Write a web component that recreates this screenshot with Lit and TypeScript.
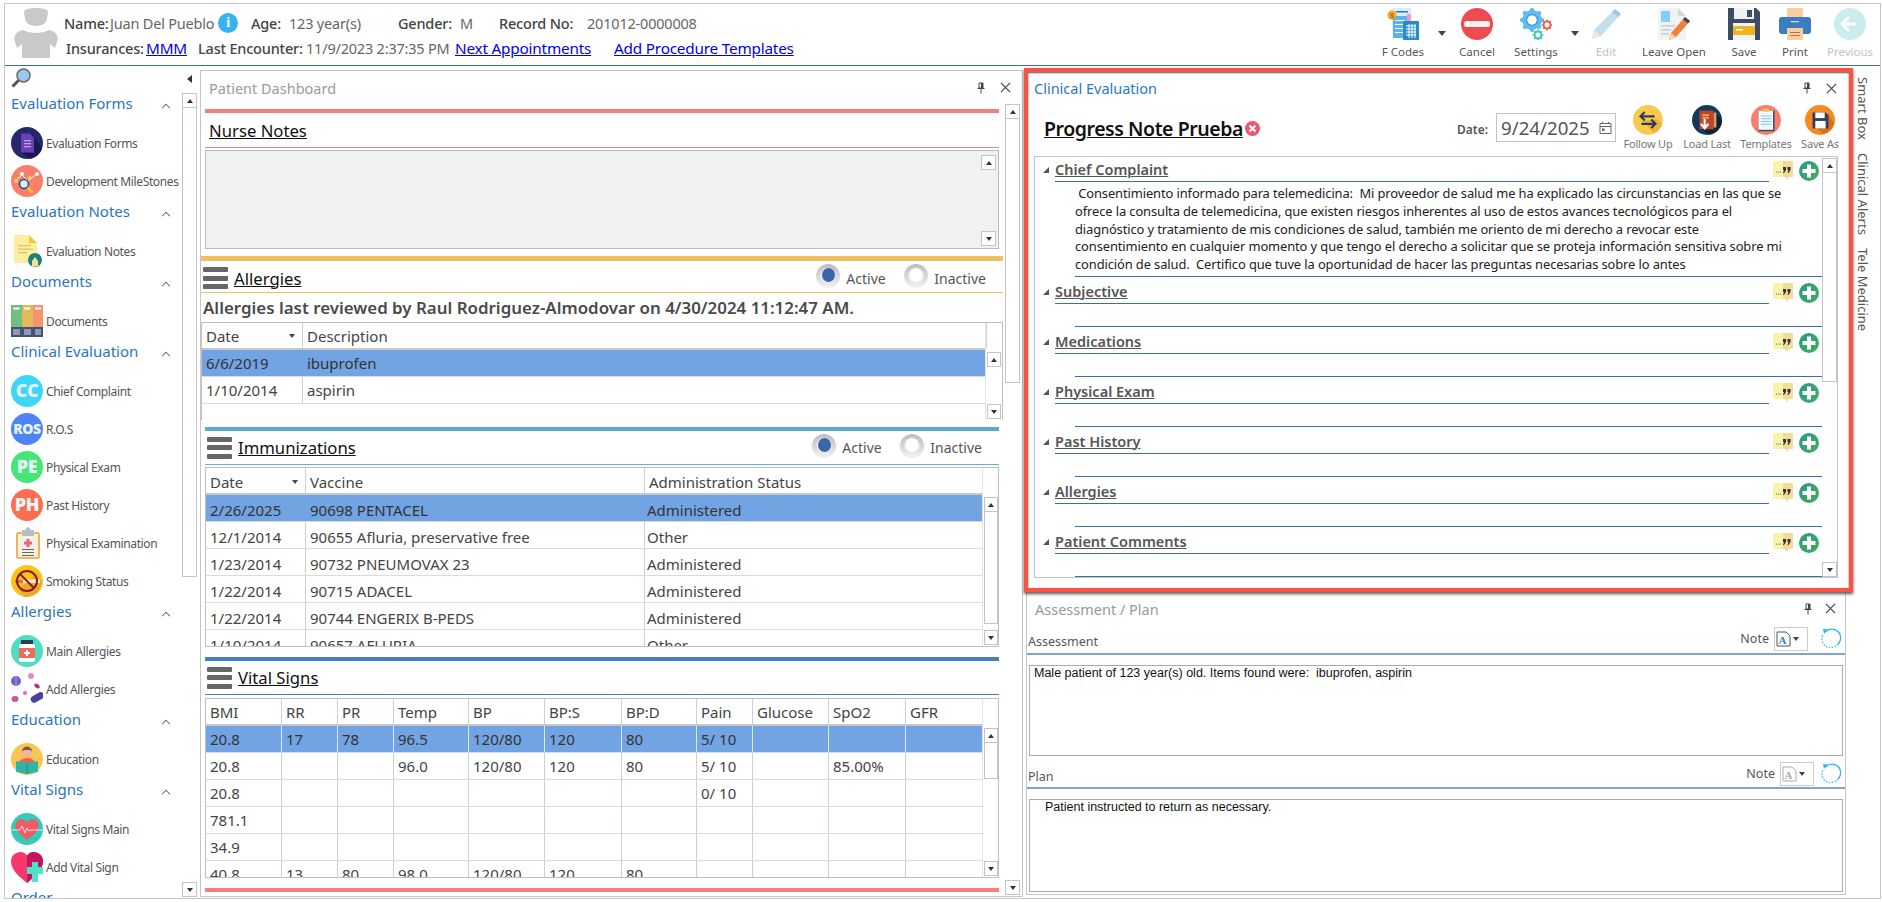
import { LitElement, html, css, svg } from "lit";
import { customElement } from "lit/decorators.js";

const gear = (cx: number, cy: number, r: number, color: string, teeth = 8, ring = "") => {
  let d = "";
  const n = teeth * 4;
  for (let i = 0; i < n; i++) {
    const a = ((i - 0.5) / n) * Math.PI * 2;
    const rad = i % 4 < 2 ? r : r * 0.8;
    d += `${i ? "L" : "M"}${(cx + Math.cos(a) * rad).toFixed(2)} ${(cy + Math.sin(a) * rad).toFixed(2)}`;
  }
  return svg`<path d="${d}Z" fill="${color}"/><circle cx="${cx}" cy="${cy}" r="${r * 0.45}" fill="#fff" stroke="${ring || color}" stroke-width="${ring ? 1.2 : 0}"/>`;
};

const ico = (body: unknown, vb = "0 0 32 32") =>
  html`<svg viewBox=${vb} width="32" height="32">${body}</svg>`;

const badge = (bg: string, t: string, size = 15) =>
  ico(svg`<circle cx="16" cy="16" r="16" fill="${bg}"/><text x="16" y="${16 + size * 0.36}" text-anchor="middle" font-family="Open Sans,sans-serif" font-weight="800" font-size="${size}" fill="#e6f4f4">${t}</text>`);

const ICONS: Record<string, unknown> = {
  forms: ico(svg`<circle cx="16" cy="16" r="16" fill="#25296b"/><path d="M11 26l10-20 10 16a16 16 0 0 1-12 9.700z" fill="#181a4c"/><path d="M10 6.500h9l4 4v15H10z" fill="#6a3fb5"/><g fill="#b9a3e3"><rect x="13" y="13" width="7" height="1.300"/><rect x="13" y="16" width="7" height="1.300"/><rect x="13" y="19" width="7" height="1.300"/></g>`),
  miles: ico(svg`<circle cx="16" cy="16" r="16" fill="#f8806a"/><path d="M4 16l7-6 6 6 9-7" stroke="#fff" stroke-width="1" fill="none"/><circle cx="5" cy="16" r="2" fill="#f6d06a"/><circle cx="11" cy="9" r="2" fill="#fff"/><circle cx="19" cy="13" r="2" fill="#f6d06a"/><circle cx="26" cy="9" r="2" fill="#dff"/><circle cx="13" cy="19" r="4.500" fill="#cfeff5" stroke="#2b4a6b" stroke-width="1.500"/><path d="M16.500 22.500l5 5" stroke="#f5c04a" stroke-width="2.500"/>`),
  evnote: ico(svg`<path d="M3 0h15l8 8v20H3z" fill="#fbeea0"/><path d="M18 0l8 8h-8z" fill="#f1c93c"/><g fill="#d9c46a"><rect x="7" y="10" width="13" height="1.300"/><rect x="7" y="13.500" width="15" height="1.300"/><rect x="7" y="17" width="9" height="1.300"/></g><circle cx="24" cy="25" r="7" fill="#1d7e86"/><path d="M21 32v-6l3-4 3 4v5z" fill="#f8e08a"/>`),
  docs: ico(svg`<rect width="11" height="32" fill="#6fc07f"/><rect x="11" width="11" height="32" fill="#e4b95a"/><rect x="22" width="10" height="32" fill="#f0956f"/><g fill="#fff"><rect x="2.500" y="2.500" width="6" height="2"/><rect x="13" y="2.500" width="6" height="2"/><rect x="24" y="2.500" width="6" height="2"/></g><rect y="22" width="32" height="10" fill="#44526f"/><g fill="#8b98bb"><rect x="2" y="24" width="7" height="6"/><rect x="13" y="24" width="7" height="6"/><rect x="24" y="24" width="6" height="6"/></g>`),
  cc: badge("#3ed5fb", "CC", 18),
  ros: badge("#4e85f6", "ROS", 14),
  pe: badge("#45e578", "PE", 18),
  ph: badge("#fb6e50", "PH", 18),
  clip: ico(svg`<rect x="5" y="5" width="24" height="27" rx="2" fill="#f4b35e"/><rect x="7" y="7" width="20" height="23" fill="#f6f0e2"/><rect x="11" y="3" width="12" height="6" rx="1" fill="#b6bcc4"/><circle cx="17" cy="2.500" r="2.200" fill="#b6bcc4"/><path d="M15.500 12h3v2.500H21v3h-2.500V20h-3v-2.500H13v-3h2.500z" fill="#f0627a"/><g fill="#666"><rect x="11" y="22" width="12" height="1"/><rect x="11" y="25" width="12" height="1"/><rect x="11" y="28" width="12" height="1"/></g>`),
  smoke: ico(svg`<circle cx="16" cy="16" r="16" fill="#f9c416"/><path d="M8 24L26 8l5 10a16 16 0 0 1-18 13.500z" fill="#eba831"/><rect x="4" y="14.500" width="25" height="3.500" fill="#f3e9dc"/><rect x="4" y="14.500" width="8" height="3.500" fill="#e2763a"/><circle cx="16" cy="16" r="10" fill="none" stroke="#8c1c14" stroke-width="2"/><path d="M9 9l14 14" stroke="#8c1c14" stroke-width="2"/>`),
  mainall: ico(svg`<circle cx="16" cy="16" r="16" fill="#4fdcc4"/><rect x="10" y="5" width="12" height="4" fill="#2a3f55"/><rect x="8" y="9" width="16" height="18" rx="2.500" fill="#fff"/><rect x="8" y="13" width="16" height="10" fill="#f26b55"/><path d="M15 15h2v2h2v2h-2v2h-2v-2h-2v-2h2z" fill="#fff"/>`),
  addall: ico(svg`<circle cx="5" cy="8" r="5" fill="#6b63c9"/><rect x="4.500" y="3" width="1" height="10" fill="#a9a5e6"/><circle cx="20" cy="3" r="3" fill="#e38fc4"/><ellipse cx="26" cy="13" rx="3" ry="2" fill="#a03a86" transform="rotate(40 26 13)"/><circle cx="14" cy="20" r="2" fill="#ee5fb6"/><ellipse cx="4" cy="26" rx="3.500" ry="3" fill="#c9569b"/><rect x="19" y="21" width="14" height="7" rx="3.500" fill="#4b3fa0" transform="rotate(-30 26 24)"/>`),
  edu: ico(svg`<circle cx="16" cy="16" r="16" fill="#fac653"/><circle cx="16" cy="9.500" r="5" fill="#f2b79a"/><path d="M11 8.500a5 5 0 0 1 10 0l-2-1.500h-6z" fill="#7a5a46"/><path d="M7 24c0-7 5-9 9-9s9 2 9 9z" fill="#e9694f"/><path d="M5 18l11 2 11-2v11l-11 2-11-2z" fill="#2fb5a6"/><rect x="15.500" y="20" width="1" height="11" fill="#1e8b80"/>`),
  vital: ico(svg`<circle cx="16" cy="16" r="16" fill="#35c9b7"/><path d="M16 27C8 21 4.500 17 4.500 12.500A6 6 0 0 1 16 10a6 6 0 0 1 11.500 2.500C27.500 17 24 21 16 27z" fill="#f25a65"/><path d="M0 17h9l2-4 3 7 2-5 2 3 2-1h12" stroke="#fff" stroke-width=".800" fill="none"/>`),
  addvital: ico(svg`<path d="M16 32C6 24 0 18 0 10a9 9 0 0 1 16-5.500A9 9 0 0 1 32 10c0 8-6 14-16 22z" fill="#f8386a"/><path d="M16 4.500A9 9 0 0 1 32 10c0 8-6 14-16 22z" fill="#c5155f"/><path d="M21 11h6v5h5v7h-5v8h-6v-8h-5v-7h5z" fill="#4ee2cb"/>`),
  fcodes: ico(svg`<rect x="5" y="0" width="19" height="25" fill="#d9ecfb"/><rect x="9" y="3" width="12" height="1.500" fill="#3c6fa5"/><rect x="20" y="6" width="4" height="10" fill="#f19cc0"/><rect x="6" y="8" width="14" height="22" fill="#5cb2ec"/><g fill="#fff"><rect x="8" y="12" width="10" height="1"/><rect x="8" y="16" width="10" height="1"/><rect x="8" y="20" width="10" height="1"/><rect x="8" y="24" width="10" height="1"/></g><rect x="16" y="13" width="16" height="19" fill="#2b8bc9"/><path d="M19 18h10M19 21h10M19 24h10M19 27h10M22 16v14M25 16v14M28 16v14" stroke="#fff" stroke-width="1"/><circle cx="5" cy="7" r="4.500" fill="#f6a623"/><text x="5" y="10" text-anchor="middle" font-size="7" fill="#8a5a00" font-family="Noto Sans">$</text>`),
  cancel: ico(svg`<circle cx="16" cy="16" r="16" fill="#ee4b50"/><rect x="3" y="13" width="26" height="6" rx="2.500" fill="#f5f1ee"/>`),
  settings: ico(svg`${gear(12, 12, 12, "#5fbcf0", 8, "#2e8ed6")}${gear(27, 17, 5.500, "#ef6a55", 8)}${gear(18, 27, 5.500, "#3fcfb1", 8)}`),
  edit: ico(svg`<path d="M25 1l6 5L11 28l-9 3 2-9z" fill="#c1dfec"/><path d="M25 1l6 5-3 3-6-5z" fill="#9fcbe0"/><path d="M4 22l7 6-9 3z" fill="#f2e6da"/>`),
  leave: ico(svg`<path d="M0 0h20l8 8v24H0z" fill="#f0f2f5"/><path d="M20 0l8 8h-8z" fill="#d5d9de"/><rect x="3" y="3" width="9" height="11" fill="#7fd0f7"/><g fill="#c6ccd4"><rect x="3" y="17" width="14" height="1.500"/><rect x="3" y="21" width="10" height="1.500"/><rect x="3" y="25" width="8" height="1.500"/></g><path d="M27 9l5 4-14 16-7 3 2-7z" fill="#f0803c"/><path d="M27 9l5 4-2 2.500-5-4z" fill="#3d4a5c"/><path d="M13 25l5 4-7 3z" fill="#f4d7a5"/>`),
  save: ico(svg`<path d="M0 0h28l4 4v28H0z" fill="#3f4a63"/><rect x="6" y="0" width="20" height="11" fill="#f1f2f2"/><rect x="19" y="2" width="5" height="7" fill="#3f4a63"/><rect x="5" y="15" width="22" height="17" fill="#f1f2f2"/><rect x="5" y="18" width="22" height="9" fill="#ecb71d"/><rect x="8" y="21" width="7" height="1.500" fill="#fff"/>`),
  print: ico(svg`<rect x="8" y="0" width="16" height="10" fill="#f7cf9e"/><rect x="0" y="9" width="32" height="17" rx="3" fill="#3c7cc0"/><rect x="12" y="13" width="8" height="1.300" fill="#c9def2"/><rect x="8" y="20" width="16" height="12" fill="#f7cf9e"/><g fill="#a8764a"><rect x="11" y="24" width="10" height="1"/><rect x="11" y="27" width="10" height="1"/></g>`),
  prev: ico(svg`<circle cx="16" cy="16" r="16" fill="#c9ecef"/><path d="M22 16H9m6-7l-7 7 7 7" stroke="#fff" stroke-width="2.800" fill="none"/>`),
};

const CICONS: Record<string, unknown> = {
  follow: html`<svg viewBox="0 0 32 32" width="30" height="30"><circle cx="16" cy="16" r="16" fill="#fac94f"/><path d="M10 17l12 13a16 16 0 0 0 9-10L26 15z" fill="#eeb33f"/><path d="M9 12h14M12.500 7.500L8 12l4.500 4.500M23 20H9M19.500 15.500L24 20l-4.500 4.500" stroke="#2c3e55" stroke-width="2.400" fill="none"/></svg>`,
  load: html`<svg viewBox="0 0 32 32" width="30" height="30"><circle cx="16" cy="16" r="16" fill="#123a5e"/><path d="M23 6l9 10a16 16 0 0 1-13 15.700L10 26z" fill="#0c2438"/><rect x="8" y="6" width="15" height="20" fill="#c0432c"/><rect x="23" y="8" width="3" height="16" fill="#e59a5c"/><rect x="11" y="10" width="7" height="1.500" fill="#f5c84a"/><rect x="11" y="13" width="7" height="1.500" fill="#f5c84a"/><path d="M13.500 15v9m-4-4l4 5 4-5" stroke="#fff" stroke-width="2.200" fill="none"/></svg>`,
  tmpl: html`<svg viewBox="0 0 32 32" width="30" height="30"><circle cx="16" cy="16" r="16" fill="#f77e6c"/><rect x="8" y="6" width="17" height="22" fill="#2f4a66"/><rect x="8" y="6" width="15.500" height="20.500" fill="#eef7fb"/><rect x="13" y="4" width="6" height="3.500" fill="#f5c84a"/><g fill="#8fd0ee"><rect x="10.500" y="11" width="11" height="1.200"/><rect x="10.500" y="14" width="11" height="1.200"/><rect x="10.500" y="17" width="11" height="1.200"/><rect x="10.500" y="20" width="11" height="1.200"/></g></svg>`,
  saveas: html`<svg viewBox="0 0 32 32" width="30" height="30"><circle cx="16" cy="16" r="16" fill="#f58a25"/><path d="M13 25l12-15 6 9a16 16 0 0 1-12 12z" fill="#dc6f14"/><path d="M8 8h14l3 3v14H8z" fill="#2f4058"/><rect x="11" y="8" width="10" height="6" fill="#fff"/><rect x="11" y="17" width="11" height="8" fill="#fff"/></svg>`,
};

const pin = html`<svg class="pin" viewBox="0 0 8 12" width="8" height="12"><path d="M2 1h4v5H2zM.5 6.500h7M4 7v4.500" stroke="#444" fill="none"/><rect x="4" y="1" width="2" height="5" fill="#444"/></svg>`;
const closeX = html`<svg class="x" viewBox="0 0 12 12" width="11" height="11"><path d="M1 1l10 10M11 1L1 11" stroke="#444" stroke-width="1.300"/></svg>`;
const quote = html`<svg viewBox="0 0 20 19" width="20" height="19"><path d="M1 0h18a1 1 0 0 1 1 1v15h-5v3l-3-3H1a1 1 0 0 1-1-1V1a1 1 0 0 1 1-1z" fill="#f8f4ab"/><path d="M10 0h9a1 1 0 0 1 1 1v15h-5v3l-3-3h-2z" fill="#f3dc96"/><g fill="#555"><circle cx="3.500" cy="11" r=".6"/><circle cx="5.500" cy="11" r=".6"/><circle cx="7.500" cy="11" r=".6"/></g><path d="M10 6h3v3l-2 3h-1l1-3h-1zM14.500 6h3v3l-2 3h-1l1-3h-1z" fill="#333"/></svg>`;
const plus = html`<svg viewBox="0 0 20 20" width="20" height="20"><defs><linearGradient id="pg" x1="0" y1="0" x2="1" y2="1"><stop offset="0" stop-color="#2b9a86"/><stop offset="1" stop-color="#41ad5b"/></linearGradient></defs><circle cx="10" cy="10" r="10" fill="url(#pg)"/><path d="M8 3.500h4V8h4.500v4H12v4.500H8V12H3.500V8H8z" fill="#fff"/></svg>`;
const refresh = html`<svg class="rf" viewBox="0 0 20 20" width="20" height="20"><path d="M5 3.500A8.500 8.500 0 1 1 17 16" fill="none" stroke="#2cb5f0" stroke-width="1.300"/><path d="M17 16A8.500 8.500 0 0 1 2.500 6" fill="none" stroke="#2cb5f0" stroke-width="1.300" stroke-dasharray="1.500 1.500"/><path d="M2 1l5 .5L3 6z" fill="#2cb5f0"/></svg>`;
const noteIco = (dim: boolean) => html`<svg viewBox="0 0 15 16" width="15" height="16"><path d="M1 1h9l4 4v10H1z" fill="#fff" stroke=${dim ? "#aaa" : "#555"}/><text x="6.500" y="12.500" text-anchor="middle" font-family="Liberation Serif" font-weight="700" font-size="11" fill=${dim ? "#aaa" : "#2f7fd0"}>A</text></svg>`;

const scroll = (thumb: number) =>
  html`<div class="sb"><div class="sbb up"></div>${thumb ? html`<div class="sbt" style="height:${thumb}px"></div>` : ""}<div class="grow"></div><div class="sbb dn"></div></div>`;

const burger = html`<div class="burger"><i></i><i></i><i></i></div>`;

const radios = html`<div class="radios"><span class="radio on"></span><span class="rl">Active</span><span class="radio"></span><span class="rl">Inactive</span></div>`;

interface GridDef {
  cols: number[];
  head: string[];
  rows: string[][];
  thumb: number;
  lines?: boolean;
  cls: string;
}

const GRIDS: Record<string, GridDef> = {
  allergies: {
    cols: [101, 684],
    head: ["Date", "Description"],
    rows: [["6/6/2019", "ibuprofen"], ["1/10/2014", "aspirin"]],
    thumb: 0,
    cls: "g-all",
  },
  imm: {
    cols: [100, 339, 338],
    head: ["Date", "Vaccine", "Administration Status"],
    rows: [
      ["2/26/2025", "90698 PENTACEL", "Administered"],
      ["12/1/2014", "90655 Afluria, preservative free", "Other"],
      ["1/23/2014", "90732 PNEUMOVAX 23", "Administered"],
      ["1/22/2014", "90715 ADACEL", "Administered"],
      ["1/22/2014", "90744 ENGERIX B-PEDS", "Administered"],
      ["1/10/2014", "90657 AFLURIA", "Other"],
    ],
    thumb: 112,
    cls: "g-imm",
  },
  vit: {
    cols: [76, 56, 56, 75, 76, 77, 75, 56, 76, 77, 76],
    head: ["BMI", "RR", "PR", "Temp", "BP", "BP:S", "BP:D", "Pain", "Glucose", "SpO2", "GFR"],
    rows: [
      ["20.8", "17", "78", "96.5", "120/80", "120", "80", "5/ 10", "", "", ""],
      ["20.8", "", "", "96.0", "120/80", "120", "80", "5/ 10", "", "85.00%", ""],
      ["20.8", "", "", "", "", "", "", "0/ 10", "", "", ""],
      ["781.1", "", "", "", "", "", "", "", "", "", ""],
      ["34.9", "", "", "", "", "", "", "", "", "", ""],
      ["40.8", "13", "80", "98.0", "120/80", "120", "80", "", "", "", ""],
    ],
    thumb: 36,
    lines: true,
    cls: "g-vit",
  },
};

const renderGrid = (g: GridDef) => {
  const tpl = g.cols.map((c) => `${c}px`).join(" ");
  return html`<div class="grid ${g.cls}">
    <div class="gbody">
      <div class="grow-row ghead" style="grid-template-columns:${tpl}">${g.head.map((h, i) => html`<div class="cell">${h}${i === 0 && g.cls !== "g-vit" ? html`<span class="sort"></span>` : ""}</div>`)}</div>
      ${g.rows.map((r, i) => html`<div class="grow-row ${i === 0 ? "sel" : ""} ${g.lines ? "lines" : ""}" style="grid-template-columns:${tpl}">${r.map((c) => html`<div class="cell">${c}</div>`)}</div>`)}
    </div>
    <div class="gscroll"><div class="ghfill"></div>${scroll(g.thumb)}</div>
  </div>`;
};

const SIDE: { title: string; items: [string, string][] }[] = [
  { title: "Evaluation Forms", items: [["forms", "Evaluation Forms"], ["miles", "Development MileStones"]] },
  { title: "Evaluation Notes", items: [["evnote", "Evaluation Notes"]] },
  { title: "Documents", items: [["docs", "Documents"]] },
  {
    title: "Clinical Evaluation",
    items: [["cc", "Chief Complaint"], ["ros", "R.O.S"], ["pe", "Physical Exam"], ["ph", "Past History"], ["clip", "Physical Examination"], ["smoke", "Smoking Status"]],
  },
  { title: "Allergies", items: [["mainall", "Main Allergies"], ["addall", "Add Allergies"]] },
  { title: "Education", items: [["edu", "Education"]] },
  { title: "Vital Signs", items: [["vital", "Vital Signs Main"], ["addvital", "Add Vital Sign"]] },
  { title: "Order", items: [] },
];

const TOOLS: [string, string, boolean][] = [
  ["fcodes", "F Codes", false],
  ["", "", false],
  ["cancel", "Cancel", false],
  ["settings", "Settings", false],
  ["", "", false],
  ["edit", "Edit", true],
  ["leave", "Leave Open", false],
  ["save", "Save", false],
  ["print", "Print", false],
  ["prev", "Previous", true],
];

const CLIN = ["Subjective", "Medications", "Physical Exam", "Past History", "Allergies", "Patient Comments"];
const CC_TEXT = ` Consentimiento informado para telemedicina:  Mi proveedor de salud me ha explicado las circunstancias en las que se
ofrece la consulta de telemedicina, que existen riesgos inherentes al uso de estos avances tecnológicos para el
diagnóstico y tratamiento de mis condiciones de salud, también me oriento de mi derecho a revocar este
consentimiento en cualquier momento y que tengo el derecho a solicitar que se proteja información sensitiva sobre mi
condición de salud.  Certifico que tuve la oportunidad de hacer las preguntas necesarias sobre lo antes`;

@customElement("app-root")
export class AppRoot extends LitElement {
  static styles = css`
    :host {
      display: block;
      width: 1882px;
      height: 902px;
      overflow: hidden;
      background: #fff;
      font-family: "Noto Sans", "Open Sans", sans-serif;
      color: #444;
    }
    * { box-sizing: border-box; }
    svg { display: block; flex: none; }
    .grow { flex: 1; }
    .frame {
      margin: 3px 0 0 4px;
      width: 1877px;
      height: 896px;
      border: 1px solid #c6c6c6;
      display: flex;
      flex-direction: column;
    }
    /* header */
    .hdr {
      height: 62px;
      flex: none;
      border-bottom: 1px solid #3b6ea5;
      display: flex;
    }
    .avatar { margin: 4px 0 0 9px; width: 44px; height: 50px; flex: none; }
    .pinfo { margin-left: 6px; padding-top: 6px; flex: none; }
    .r1, .r2 { display: grid; white-space: nowrap; align-items: center; font-size: 14.5px; letter-spacing: -.2px; color: #666; }
    .r1 { grid-template-columns: 46px 108px 33px 38px 109px 62px 39px 88px auto; height: 26px; }
    .r2 { grid-template-columns: 80px 52px 108px 149px 159px auto; height: 24px; margin-left: 2px; }
    .lb { color: #444; font-weight: 500; }
    .info { width: 20px; height: 20px; border-radius: 50%; background: #35b4f3; color: #fff; font: 700 14px "Liberation Serif", serif; text-align: center; line-height: 20px; }
    a { color: #0000ee; text-decoration: underline; font-size: 15.300px; }
    .tools {
      margin-left: auto;
      display: grid;
      grid-template-columns: 54px 24px 46px 66px 18px 44px 92px 48px 54px 56px;
      margin-right: 2px;
      flex: none;
    }
    .tool { display: flex; flex-direction: column; align-items: center; padding-top: 4px; font-size: 11.5px; color: #555; white-space: nowrap; }
    .tool.set { padding-left: 6px; }
    .tool span { margin-top: 3px; line-height: 18px; }
    .tool.dis { color: #c2c2c2; }
    .dd { display: flex; justify-content: center; padding-top: 27px; }
    .dd::before { content: ""; border: 4px solid transparent; border-top: 5px solid #444; border-bottom: 0; height: 0; width: 0; }
    /* body */
    .body { flex: 1; display: flex; min-height: 0; }
    .side { width: 193px; flex: none; display: flex; flex-direction: column; }
    .stop { height: 26px; flex: none; display: flex; justify-content: space-between; align-items: center; padding: 0 4px 2px 6px; }
    .stri { border: 4px solid transparent; border-right: 5px solid #333; border-left: 0; width: 0; height: 0; margin-top: 2px; margin-right: 2px; }
    .smain { flex: 1; min-height: 0; display: flex; }
    .slist { width: 177px; overflow: hidden; padding-left: 6px; height: 806px; flex: none; }
    .stitle { height: 32px; display: flex; align-items: flex-start; justify-content: space-between; font-size: 15px; color: #2a74c4; padding-right: 12px; line-height: 22px; white-space: nowrap; }
    .chev { width: 8px; height: 8px; border-left: 1.500px solid #444; border-top: 1.500px solid #444; transform: rotate(45deg) scale(.75); margin-top: 12px; }
    .sitem { height: 38px; display: flex; align-items: center; gap: 3px; font-size: 12px; letter-spacing: -.37px; color: #555; white-space: nowrap; }
    .sb { width: 15px; flex: none; display: flex; flex-direction: column; }
    .smain .sb { margin: 1px 0 1px; }
    .sbb { height: 15px; flex: none; border: 1px solid #c4c4c4; background: #fff; display: flex; align-items: center; justify-content: center; }
    .sbb::before { content: ""; width: 0; height: 0; border: 3.500px solid transparent; }
    .up::before { border-bottom: 4px solid #333; border-top: 0; }
    .dn::before { border-top: 4px solid #333; border-bottom: 0; }
    .sbt { border: 1px solid #c4c4c4; border-top: 0; flex: none; }
    /* dashboard */
    .dash { margin: 4px 0 1px 2px; width: 823px; border: 1px solid #c6c6c6; flex: none; display: flex; flex-direction: column; }
    .ptitle { height: 33px; flex: none; display: flex; align-items: center; font-size: 14.5px; color: #999; padding-left: 8px; }
    .ptitle .pin { margin-left: auto; }
    .dash .ptitle .pin { margin-right: 15px; }
    .dash .ptitle .x { margin-right: 11px; }
    .dmain { flex: 1; display: flex; min-height: 0; }
    .dcol { width: 804px; flex: none; }
    .dmain > .sb { margin-bottom: 1px; }
    .sec { margin-left: 4px; width: 794px; }
    .sec.wide { margin-left: 0; width: 802px; }
    .bar { height: 4px; }
    .red { background: #f47f7f; }
    .yel { background: #f0c060; height: 5px; }
    .blu { background: #5ba9cf; }
    .dbl { background: #4a7ebb; }
    .shead { display: flex; align-items: center; height: 33px; padding-left: 2px; border-bottom: 1px solid; font-size: 16.700px; color: #111; }
    .shead u { margin-left: 6px; }
    .nn { height: 35px; padding-left: 4px; border-bottom-color: #f47f7f; }
    .nn u { margin: 0; }
    .nbox { margin-top: 2px; height: 99px; background: #f1f1f1; border: 1px solid #bbb; display: flex; justify-content: flex-end; padding: 4px 2px 2px 0; }
    .burger { width: 25px; display: flex; flex-direction: column; gap: 3.500px; flex: none; }
    .burger i { height: 5px; background: #666; border-radius: 1px; display: block; }
    .radios { margin-left: auto; display: flex; align-items: center; font-size: 14px; color: #555; margin-right: 17px; }
    .radio { width: 24px; height: 24px; border-radius: 50%; background: radial-gradient(circle at 50% 46%, #fff 0 6px, rgba(255,255,255,0) 8px), linear-gradient(#bcbcbc, #f3f3f3); position: relative; margin-top: -4px; }
    .radio.on::after { content: ""; position: absolute; left: 5.500px; top: 4px; width: 13px; height: 14px; border-radius: 50%; background: #3a67a8; }
    .rl { margin-left: 6px; margin-right: 18px; width: 40px; }
    .rl:last-child { margin-right: 0; width: auto; }
    .hall { border-bottom-color: #f0c060; height: 32px; padding-top: 3px; }
    .himm { border-bottom-color: #5fb0dc; height: 34px; }
    .hvit { border-bottom-color: #4a7ebb; height: 34px; }
    .reviewed { height: 29px; display: flex; align-items: center; padding-left: 2px; font-size: 16.900px; font-weight: 600; color: #4a4a4a; white-space: nowrap; }
    .grid { display: flex; border: 1px solid #c0c0c0; overflow: hidden; }
    .g-all { height: 98px; border-bottom: 0; }
    .g-imm { margin-top: 2px; height: 180px; }
    .g-vit { margin-top: 3px; height: 180px; }
    .gbody { flex: 1; min-width: 0; }
    .grow-row { display: grid; height: 27px; font-size: 15px; color: #444; border-bottom: 1px solid #d8dbe0; }
    .ghead { border-bottom: 2px solid #c8c8c8; }
    .cell { padding: 0 4px; display: flex; align-items: center; justify-content: space-between; border-right: 1px solid #c9d1dc; white-space: nowrap; }
    .g-imm .cell { padding-top: 4px; }
    .g-imm .ghead .cell { padding-top: 2px; }
    .g-imm .grow-row:not(.ghead) .cell:nth-child(3) { padding-left: 2px; }
    .grow-row.sel { background: #72a3e2; color: #333; }
    .grow-row.sel .cell { border-right-color: transparent; }
    .grow-row.sel.lines .cell { border-right-color: #dfe7f2; }
    .g-all .grow-row:not(.ghead) .cell:last-child, .g-imm .grow-row:not(.ghead) .cell:last-child, .g-vit .cell:last-child { border-right: 0; }
    .sort { width: 0; height: 0; border: 3.500px solid transparent; border-top: 4px solid #444; border-bottom: 0; margin-right: 3px; }
    .gscroll { flex: none; display: flex; flex-direction: column; width: 16px; border-left: 1px solid #e5e5e5; align-items: center; }
    .g-all .gscroll { width: 17px; }
    .ghfill { height: 29px; flex: none; }
    .gscroll .sb { flex: 1; width: 14px; margin-bottom: 1px; }
    /* center */
    .center { margin-left: 1px; width: 829px; flex: none; padding-top: 2px; display: flex; flex-direction: column; }
    .clin { height: 524px; flex: none; border: 4px solid #fb5246; box-shadow: inset 0 1px 2px #555, 0 2px 3px #555; display: flex; flex-direction: column; background: #fff; position: relative; }
    .ctitle { height: 32px; flex: none; display: flex; align-items: center; padding-left: 6px; font-size: 14.5px; color: #2a78c6; }
    .ctitle .pin { margin-left: auto; margin-right: 15px; }
    .ctitle .x { margin-right: 12px; }
    .crow { height: 52px; flex: none; display: flex; align-items: flex-start; padding-right: 2px; }
    .pn { margin: 11px 0 0 16px; font-size: 19.500px; letter-spacing: -.45px; line-height: 28px; font-weight: 600; color: #111; text-decoration: underline; white-space: nowrap; }
    .pnx { width: 15px; height: 15px; border-radius: 50%; background: #f0556c; margin: 17px 0 0 2px; display: flex; }
    .dlabel { font-size: 12px; font-weight: 600; color: #555; margin: 17px 8px 0 0; }
    .dinput { width: 120px; height: 29px; border: 1px solid #c4c4c4; margin: 9px 5px 0 0; display: flex; align-items: center; justify-content: space-between; padding: 0 3px 0 4px; font-size: 18.700px; color: #555; }
    .cbtn { width: 54px; display: flex; flex-direction: column; align-items: center; padding-top: 1px; font-size: 11px; letter-spacing: -.2px; color: #777; white-space: nowrap; margin-right: 5px; }
    .cbtn:nth-last-child(2), .cbtn:last-child { margin-right: 0; }
    .cbtn span { line-height: 16px; margin-top: 1px; }
    .editor { margin-left: 6px; width: 804px; height: 422px; border: 1px solid #c4c4c4; display: flex; }
    .emain { width: 787px; flex: none; overflow: hidden; height: 420px; }
    .esec { height: 50px; }
    .esec.first { height: auto; margin-top: -2px; }
    .ehead { height: 27px; display: flex; align-items: flex-start; }
    .arrow { width: 0; height: 0; margin: 12px 0 0 8px; border-style: solid; border-width: 0 0 6px 6px; border-color: transparent transparent #555 transparent; }
    .arrow-w { width: 20px; flex: none; }
    .etitle { width: 714px; height: 27px; border-bottom: 1px solid #3b6ea5; font-size: 14.500px; font-weight: 600; color: #555; line-height: 29px; white-space: nowrap; }
    .etitle u { text-decoration-thickness: 1px; }
    .q { margin: 6px 0 0 4px; }
    .p { margin: 6px 0 0 6px; }
    .ebody { margin-left: 40px; height: 23px; border-bottom: 1px solid #3b6ea5; }
    .first .ebody { height: 95px; padding-top: 3px; font-size: 12.900px; line-height: 17.750px; color: #222; white-space: pre; letter-spacing: -.1px; overflow: hidden; }
    .editor .sb { margin: 1px 0 0; height: 419px; }
    /* assessment */
    .ap { margin-left: 2px; width: 820px; height: 303px; flex: none; border: 1px solid #c6c6c6; border-top: 0; }
    .ap .ptitle { padding-left: 8px; height: 33px; }
    .ap .ptitle .pin { margin-right: 13px; }
    .ap .ptitle .x { margin-right: 9px; }
    .aphead { height: 30px; display: flex; align-items: flex-start; border-bottom: 2px solid #7ea4cf; font-size: 12.500px; color: #555; }
    .aplab { align-self: flex-end; line-height: 22px; padding-left: 1px; }
    .note { margin-left: auto; display: flex; align-items: flex-start; }
    .note .nl { line-height: 28px; margin-right: 5px; }
    .combo { width: 34px; height: 24px; border: 1px solid #ccc; display: flex; align-items: center; padding-left: 1px; gap: 2px; margin-top: 2px; }
    .combo::after { content: ""; border: 3.500px solid transparent; border-top: 4px solid #444; border-bottom: 0; }
    .rf { margin: 3px 4px 0 13px; }
    .plan .rf { margin-left: 7px; }
    .ta { margin: 10px 2px 0; height: 91px; border: 1px solid #aaa; font: 12.500px "Liberation Sans", Arial, sans-serif; color: #111; padding: 1px 0 0 4px; line-height: 13px; }
    .ta.pl { height: 93px; padding-left: 15px; }
    .plan { height: 33px; }
    .plan .aplab { line-height: 20px; }
    .plan .note { padding-top: 4px; }
    .tabs { width: 27px; flex: none; padding: 11px 0 0 0; display: flex; flex-direction: column; gap: 13px; align-items: flex-start; }
    .tab { writing-mode: vertical-rl; font-size: 13px; line-height: 20px; color: #555; white-space: nowrap; }
  `;

  render() {
    const g = GRIDS;
    return html`<div class="frame">
      <div class="hdr">
        <svg class="avatar" viewBox="0 0 44 50"><path d="M10 4c0-3 6-4 12-4s12 1 12 4l-1 7c-1 4-5 7-11 7s-10-3-11-7z" fill="#c9c9c9"/><path d="M9 22c4 2 9 3 13 3s9-1 13-3c5 1 8 3 9 9l-3 9-5-4v14H8V36l-5 4-3-9c1-6 4-8 9-9z" fill="#c9c9c9"/></svg>
        <div class="pinfo">
          <div class="r1">
            <span class="lb">Name:</span><span>Juan Del Pueblo</span><span><div class="info">i</div></span>
            <span class="lb">Age:</span><span>123 year(s)</span>
            <span class="lb">Gender:</span><span>M</span>
            <span class="lb">Record No:</span><span>201012-0000008</span>
          </div>
          <div class="r2">
            <span class="lb">Insurances:</span><a>MMM</a>
            <span class="lb">Last Encounter:</span><span>11/9/2023 2:37:35 PM</span>
            <a>Next Appointments</a><a>Add Procedure Templates</a>
          </div>
        </div>
        <div class="tools">
          ${TOOLS.map(([k, l, d]) =>
            k
              ? html`<div class="tool ${d ? "dis" : ""} ${k === "settings" ? "set" : ""}">${ICONS[k]}<span>${l}</span></div>`
              : html`<div class="dd"></div>`
          )}
        </div>
      </div>
      <div class="body">
        <div class="side">
          <div class="stop">
            <svg viewBox="0 0 20 20" width="20" height="20"><circle cx="12.500" cy="7.500" r="6.500" fill="#9cc8f5" stroke="#6b6b5a" stroke-width="1.500"/><path d="M7.500 12.500L1.500 18.500" stroke="#5a5340" stroke-width="3"/></svg>
            <div class="stri"></div>
          </div>
          <div class="smain">
            <div class="slist">
              ${SIDE.map(
                (s) => html`<div class="stitle">${s.title}${s.items.length ? html`<div class="chev"></div>` : ""}</div>
                  ${s.items.map(([k, l]) => html`<div class="sitem">${ICONS[k]}<span>${l}</span></div>`)}`
              )}
            </div>
            ${scroll(469)}
          </div>
        </div>
        <div class="dash">
          <div class="ptitle">Patient Dashboard${pin}${closeX}</div>
          <div class="dmain">
            <div class="dcol">
              <div class="sec" style="margin-top:5px">
                <div class="bar red"></div>
                <div class="shead nn"><u>Nurse Notes</u></div>
                <div class="nbox">${scroll(0)}</div>
              </div>
              <div class="sec wide" style="margin-top:7px">
                <div class="bar yel"></div>
                <div class="shead hall">${burger}<u>Allergies</u>${radios}</div>
                <div class="reviewed">Allergies last reviewed by Raul Rodriguez-Almodovar on 4/30/2024 11:12:47 AM.</div>
                ${renderGrid(g.allergies)}
              </div>
              <div class="sec" style="margin-top:7px">
                <div class="bar blu"></div>
                <div class="shead himm">${burger}<u>Immunizations</u>${radios}</div>
                ${renderGrid(g.imm)}
              </div>
              <div class="sec" style="margin-top:10px">
                <div class="bar dbl"></div>
                <div class="shead hvit">${burger}<u>Vital Signs</u></div>
                ${renderGrid(g.vit)}
              </div>
              <div class="sec" style="margin-top:10px"><div class="bar red"></div></div>
            </div>
            ${scroll(264)}
          </div>
        </div>
        <div class="center">
          <div class="clin">
            <div class="ctitle">Clinical Evaluation${pin}${closeX}</div>
            <div class="crow">
              <div class="pn">Progress Note Prueba</div>
              <div class="pnx"><svg viewBox="0 0 15 15" width="15" height="15"><path d="M4.500 4.500l6 6m0-6l-6 6" stroke="#fff" stroke-width="2.200"/></svg></div>
              <div class="grow"></div>
              <div class="dlabel">Date:</div>
              <div class="dinput">9/24/2025<svg viewBox="0 0 13 13" width="13" height="13"><path d="M1 2.500h11v10H1zM1 5.500h11M3.500 1v2M9.500 1v2" fill="none" stroke="#666"/><rect x="3" y="7.500" width="2.500" height="2.500" fill="#666"/></svg></div>
              <div class="cbtn">${CICONS.follow}<span>Follow Up</span></div>
              <div class="cbtn">${CICONS.load}<span>Load Last</span></div>
              <div class="cbtn">${CICONS.tmpl}<span>Templates</span></div>
              <div class="cbtn">${CICONS.saveas}<span>Save As</span></div>
            </div>
            <div class="editor">
              <div class="emain">
                <div class="esec first">
                  <div class="ehead"><div class="arrow-w"><div class="arrow"></div></div><div class="etitle"><u>Chief Complaint</u></div><div class="q">${quote}</div><div class="p">${plus}</div></div>
                  <div class="ebody">${CC_TEXT}</div>
                </div>
                ${CLIN.map(
                  (t) => html`<div class="esec">
                    <div class="ehead"><div class="arrow-w"><div class="arrow"></div></div><div class="etitle"><u>${t}</u></div><div class="q">${quote}</div><div class="p">${plus}</div></div>
                    <div class="ebody"></div>
                  </div>`
                )}
              </div>
              ${scroll(209)}
            </div>
          </div>
          <div class="ap">
            <div class="ptitle">Assessment / Plan${pin}${closeX}</div>
            <div class="aphead">
              <div class="aplab">Assessment</div>
              <div class="note"><span class="nl">Note</span><div class="combo">${noteIco(false)}</div>${refresh}</div>
            </div>
            <div class="ta">Male patient of 123 year(s) old. Items found were:&nbsp; ibuprofen, aspirin</div>
            <div class="aphead plan">
              <div class="aplab">Plan</div>
              <div class="note"><span class="nl">Note</span><div class="combo">${noteIco(true)}</div>${refresh}</div>
            </div>
            <div class="ta pl">Patient instructed to return as necessary.</div>
          </div>
        </div>
        <div class="tabs"><div class="tab">Smart Box</div><div class="tab">Clinical Alerts</div><div class="tab">Tele Medicine</div></div>
      </div>
    </div>`;
  }
}
